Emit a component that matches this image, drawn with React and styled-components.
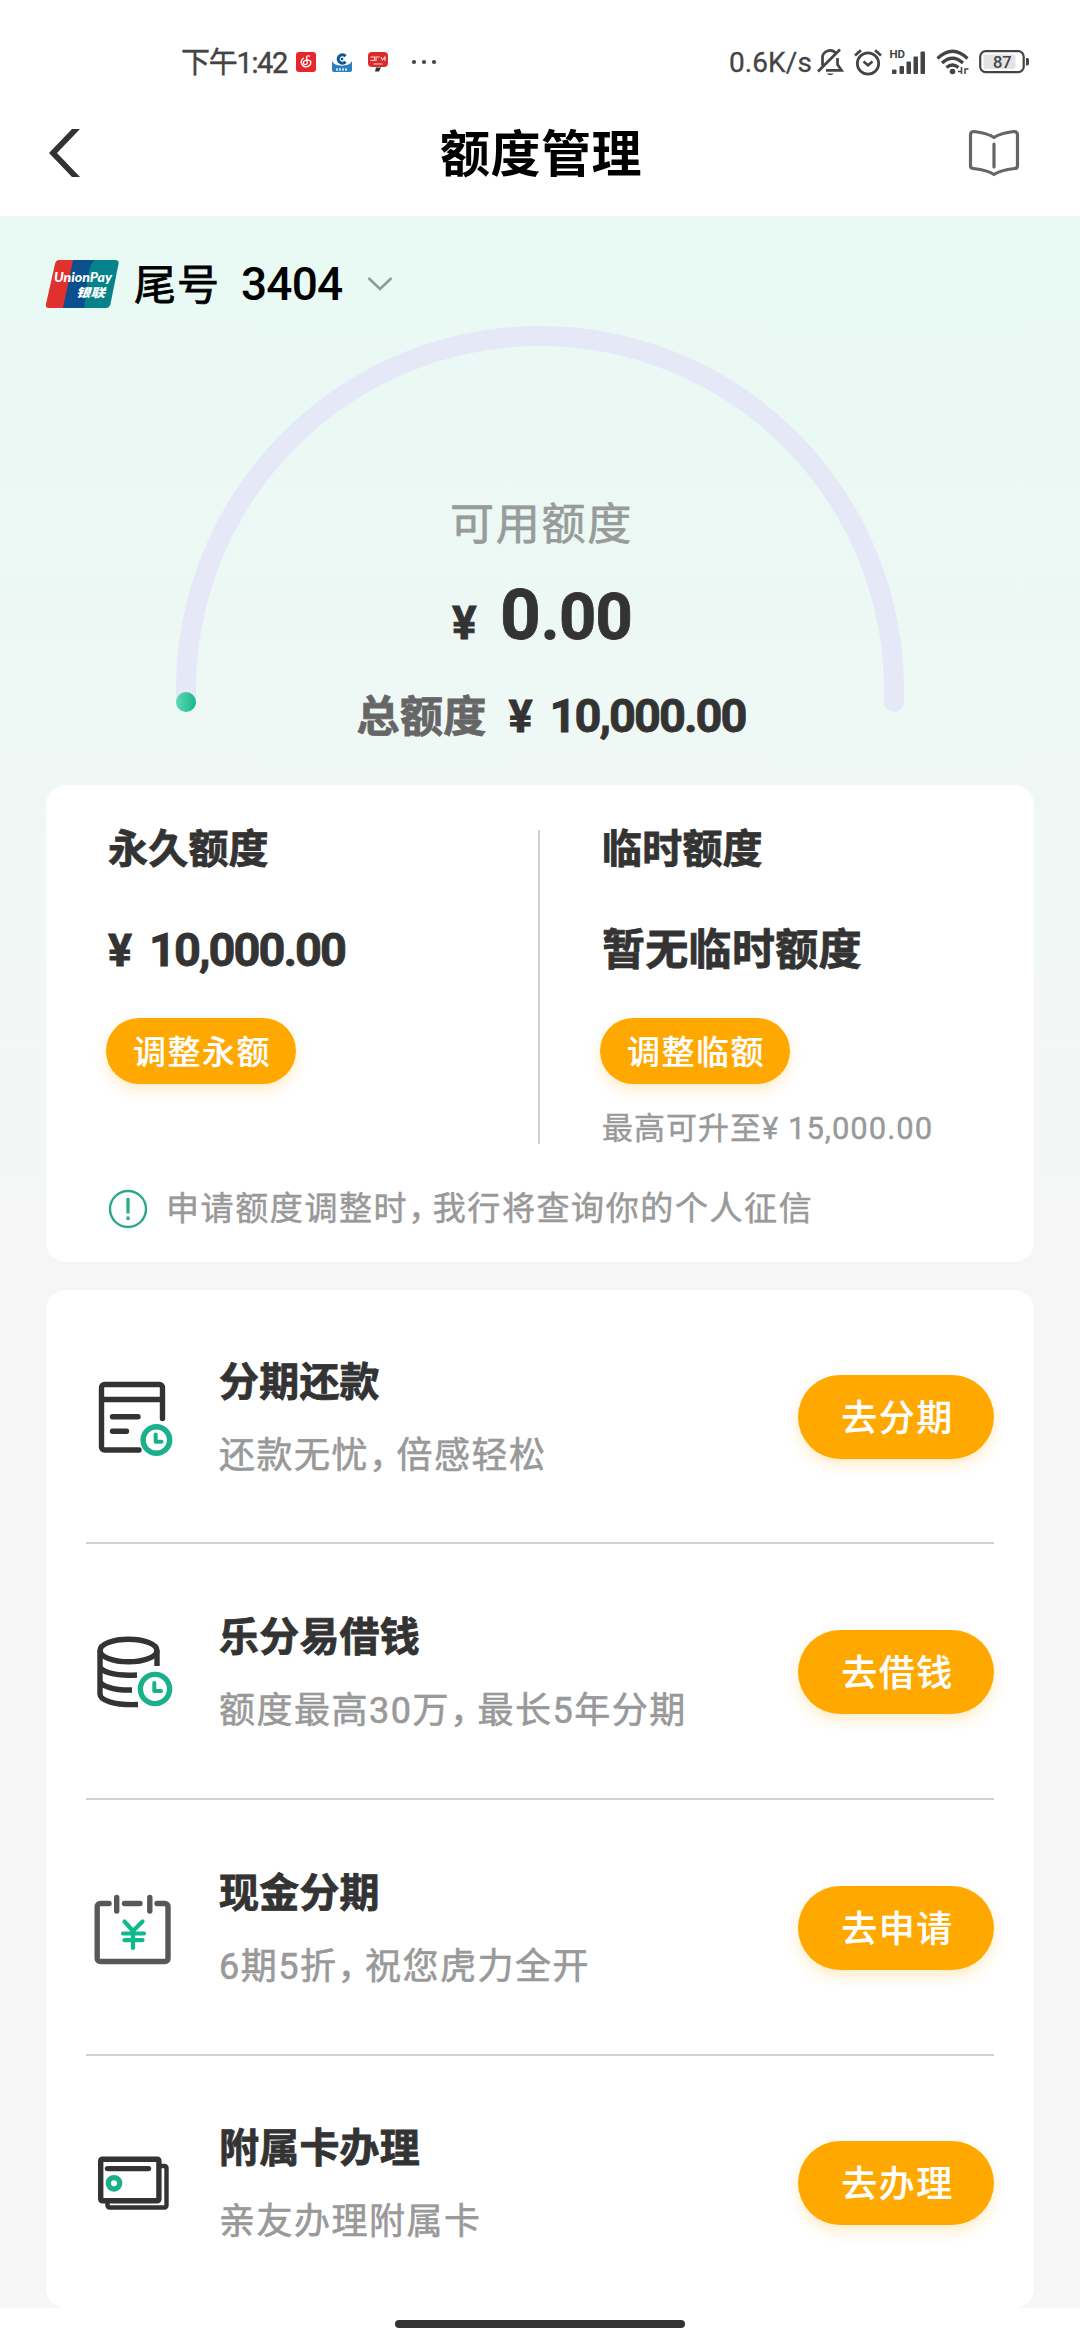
import React from "react";
import styled, { createGlobalStyle } from "styled-components";

const GlobalStyle = createGlobalStyle`
  * { box-sizing: border-box; }
  body {
    margin: 0;
    background: #fff;
    font-family: Roboto, "Noto Sans CJK SC", sans-serif;
    color: #333;
  }
  svg { display: block; flex: none; overflow: visible; }
  button { font-family: inherit; border: 0; padding: 0; }
`;

const Screen = styled.main`
  width: 1080px;
  height: 2340px;
  overflow: hidden;
  display: flex;
  flex-direction: column;
  background: #fff;
`;

/* ---------- status bar ---------- */
const StatusBar = styled.div`
  height: 100px;
  padding: 24px 51px 0 181px;
  display: flex;
  justify-content: space-between;
  align-items: center;
  color: #444;
  font-size: 28px;
  line-height: 36px;
`;
const StatusGroup = styled.div`
  display: flex;
  align-items: center;
  gap: ${(p) => p.$gap}px;
`;
const Clock = styled.span`
  width: 107px;
  margin-right: -8px;
  padding-top: 2px;
  white-space: nowrap;
  font-size: 29px;
  letter-spacing: -1.3px;
  -webkit-text-stroke: 0.4px currentColor;
`;
const Speed = styled.span`
  font-size: 28px;
  letter-spacing: 0.1px;
  padding-top: 2px;
  white-space: nowrap;
  margin-right: -5px;
  -webkit-text-stroke: 0.3px currentColor;
`;

/* ---------- header ---------- */
const Header = styled.header`
  height: 116px;
  padding: 0 61px 11px 48px;
  display: grid;
  grid-template-columns: 50px 1fr 50px;
  align-items: center;
`;
const Title = styled.h1`
  margin: 0;
  padding: 5px 0 0 15px;
  text-align: center;
  font-size: 50px;
  line-height: 60px;
  font-weight: 700;
  letter-spacing: 0.5px;
  color: #000;
`;

/* ---------- body ---------- */
const Body = styled.div`
  height: 2092px;
  padding: 44px 46px 0;
  display: flex;
  flex-direction: column;
  background: linear-gradient(#e8f9f4 0, #eff8f5 560px, #f6f6f6 1040px);
`;
const Account = styled.div`
  height: 48px;
  display: flex;
  align-items: center;
  color: #000;
  line-height: 48px;
`;
const AccountLabel = styled.span`
  margin-left: 15px;
  width: 107px;
  font-size: 42px;
  letter-spacing: 1px;
  padding-top: 3px;
  -webkit-text-stroke: 0.8px currentColor;
`;
const AccountNumber = styled.span`
  width: 126px;
  font-size: 46px;
  font-weight: 500;
  letter-spacing: -0.8px;
`;

const Gauge = styled.section`
  height: 459px;
  margin-top: 18px;
  display: grid;
  justify-items: center;
  align-items: start;
  > * { grid-area: 1 / 1; }
`;
const GaugeText = styled.div`
  display: flex;
  flex-direction: column;
  align-items: center;
`;
const Available = styled.div`
  margin-top: 171px;
  padding-left: 3px;
  font-size: 44px;
  line-height: 56px;
  letter-spacing: 1.8px;
  color: #979c9a;
  -webkit-text-stroke: 0.7px currentColor;
`;
const Balance = styled.div`
  margin-top: 22px;
  padding-left: 4px;
  height: 80px;
  line-height: 80px;
  display: flex;
  align-items: baseline;
  font-weight: 700;
  -webkit-text-stroke: 0.8px currentColor;
`;
const BalanceSign = styled.span`
  font-size: 46px;
  width: 48px;
`;
const BalanceInt = styled.span`
  font-size: 71px;
`;
const BalanceFraction = styled.span`
  font-size: 65px;
  letter-spacing: -0.8px;
`;
const Total = styled.div`
  margin: 33px 0 0 22px;
  display: flex;
  align-items: baseline;
  line-height: 56px;
  font-weight: 700;
`;
const TotalLabel = styled.span`
  width: 152px;
  font-size: 43px;
  color: #666;
  letter-spacing: 0.4px;
  -webkit-text-stroke: 0.8px currentColor;
`;
const Money = styled.span`
  display: inline-flex;
  align-items: baseline;
  font-size: 47px;
  font-weight: 700;
  line-height: 56px;
  letter-spacing: -2px;
  -webkit-text-stroke: 0.8px currentColor;
`;
const MoneySign = styled.span`
  width: 41px;
  font-size: 45px;
`;

/* ---------- cards ---------- */
const Card = styled.section`
  border-radius: 20px;
  background: #fff;
  display: flex;
  flex-direction: column;
`;
const LimitCard = styled(Card)`
  height: 477px;
  padding: 45px 0 0 60px;
`;
const Limits = styled.div`
  display: grid;
  grid-template-rows: 314px;
  grid-template-columns: 434px 60px 1fr;
`;
const Limit = styled.div`
  grid-column: ${(p) => p.$column};
  padding-left: 2px;
  display: flex;
  flex-direction: column;
  align-items: flex-start;
`;
const VerticalRule = styled.div`
  width: 2px;
  margin-left: -2px;
  background: #cfcfcf;
`;
const CardTitle = styled.h2`
  margin: 0;
  font-size: 40px;
  line-height: 40px;
  font-weight: 700;
  letter-spacing: 0.2px;
  -webkit-text-stroke: 0.8px currentColor;
`;
const LimitValue = styled.div`
  height: 56px;
  margin-top: 52px;
  font-size: 43px;
  line-height: 56px;
  font-weight: 700;
  letter-spacing: 0.3px;
  -webkit-text-stroke: 0.8px currentColor;
`;
const Pill = styled.button`
  flex: none;
  width: ${(p) => (p.$large ? 196 : 190)}px;
  height: ${(p) => (p.$large ? 84 : 66)}px;
  margin: ${(p) => (p.$large ? "2px 0 0 auto" : "40px 0 0 -2px")};
  padding: ${(p) => (p.$large ? "0 0 5px 3px" : "0 0 2px 2px")};
  border-radius: 42px;
  background: #ffa800;
  color: #fff;
  font-size: ${(p) => (p.$large ? 36 : 33)}px;
  font-weight: 500;
  letter-spacing: 1.5px;
  -webkit-text-stroke: 0.2px currentColor;
  box-shadow: 0 6px 14px rgba(255, 168, 0, 0.22);
`;
const Hint = styled.div`
  flex: none;
  margin-top: 27px;
  font-size: 31px;
  line-height: 36px;
  letter-spacing: 1px;
  color: #999;
  white-space: nowrap;
  -webkit-text-stroke: 0.4px currentColor;
`;
const Notice = styled.div`
  margin: 43px 0 0 2px;
  height: 44px;
  display: flex;
  align-items: center;
  gap: 18px;
  font-size: 33px;
  line-height: 44px;
  letter-spacing: 1.6px;
  color: #999;
  -webkit-text-stroke: 0.5px currentColor;
`;
const Comma = styled.span`
  letter-spacing: -8.5px;
`;

const ServiceCard = styled(Card)`
  height: 1018px;
  margin-top: 28px;
  padding: 0 40px;
`;
const Service = styled.article`
  height: ${(p) => (p.$edge ? 254 : 256)}px;
  display: flex;
  align-items: center;
  border-bottom: 2px solid #d2d2d2;
  &:last-child { border-bottom: 0; height: 252px; }
`;
const ServiceIcon = styled.svg`
  width: 84px;
  height: 84px;
  margin: 0 43px 0 6px;
  fill: none;
  stroke: ${(p) => p.$tone || "#333"};
  stroke-width: 5.4;
  stroke-linecap: round;
  stroke-linejoin: round;
`;
const ServiceText = styled.div`
  padding-top: 10px;
  display: flex;
  flex-direction: column;
  gap: 29px;
`;
const ServiceDesc = styled.p`
  margin: 0;
  font-size: 36px;
  line-height: 48px;
  letter-spacing: 1.5px;
  color: #999;
  -webkit-text-stroke: 0.6px currentColor;
`;

const HomeArea = styled.footer`
  flex: 1;
  display: flex;
  justify-content: center;
  padding-top: 12px;
`;
const HomeBar = styled.div`
  width: 290px;
  height: 8px;
  border-radius: 4px;
  background: #333;
`;

const GREEN = "#1ab08c";

function ServiceGlyph({ kind }) {
  if (kind === "bill")
    return (
      <ServiceIcon viewBox="0 0 84 84">
        <path d="M47 76H12.500a3 3 0 0 1-3-3V13.500a3 3 0 0 1 3-3h55a3 3 0 0 1 3 3V44.500M9.500 25.500h61M20.500 42.700H46M20.500 57.300H34.500" />
        <g stroke={GREEN}>
          <circle cx="64.400" cy="66" r="13.300" />
          <path d="M63.700 60.500V67.700H69.500" strokeWidth="4" />
        </g>
      </ServiceIcon>
    );
  if (kind === "coins")
    return (
      <ServiceIcon viewBox="0 0 84 84">
        <ellipse cx="36.500" cy="21.500" rx="28.500" ry="11.300" />
        <path d="M8 21.500V65c0 6 13 11.500 38 10.500M65 21.500V37M8 37c0 5 13 10.500 37 9M8 51.500c0 5 13 10 32 9.500" strokeLinecap="butt" />
        <g stroke={GREEN}>
          <circle cx="63" cy="60" r="14.600" />
          <path d="M62.300 54V62H69" strokeWidth="4" />
        </g>
      </ServiceIcon>
    );
  if (kind === "calendar")
    return (
      <ServiceIcon viewBox="0 0 84 84" $tone="#585858">
        <path d="M17 18.500H8.200a3 3 0 0 0-3 3V73.500a3 3 0 0 0 3 3H73a3 3 0 0 0 3-3V21.500a3 3 0 0 0-3-3H65M32.500 18.500H48M24.700 12.500V26M57.800 12.500V26" />
        <path d="M32.500 36.500l8.500 9.500 9.500-9.500M31 48.500H52M32.500 55.200H50.500M41 47V63" stroke="#10b98c" strokeWidth="4.200" />
      </ServiceIcon>
    );
  return (
    <ServiceIcon viewBox="0 0 84 84">
      <path d="M15.500 62v3.500a2 2 0 0 0 2 2h55a2 2 0 0 0 2-2V28a2 2 0 0 0-2-2H69" strokeWidth="4.400" />
      <rect x="8.700" y="19.300" width="58.200" height="41.500" rx="1.500" />
      <path d="M15.500 28.600H56.500" />
      <circle cx="22" cy="43.300" r="5.700" stroke={GREEN} />
    </ServiceIcon>
  );
}

function UnionPay() {
  return (
    <svg width="73" height="48" viewBox="0 0 73 48">
      <path d="M13 0H31L21 48H3Q-1 48 0 44L9 4Q10 0 13 0Z" fill="#e2312d" />
      <path d="M27 0H50L40 48H17Z" fill="#0b4f8e" />
      <path d="M51 0H69Q73.500 0 72.500 4L64.500 44Q63.500 48 60 48H38L42.500 14Q44.500 0 51 0Z" fill="#06838a" />
      <text x="8" y="21.500" fontFamily="Lato, sans-serif" fontWeight="900" fontStyle="italic" fontSize="13" fill="#fff" textLength="58" lengthAdjust="spacingAndGlyphs">UnionPay</text>
      <text x="30" y="37" fontFamily="Noto Sans CJK SC, sans-serif" fontWeight="900" fontStyle="italic" fontSize="12" fill="#fff" textLength="29" lengthAdjust="spacingAndGlyphs">银联</text>
    </svg>
  );
}

function MusicBadge() {
  return (
    <svg width="20" height="20" viewBox="0 0 20 20">
      <rect width="20" height="20" rx="3" fill="#e5262b" />
      <path d="M13.500 4.200Q10.500 3 10.600 6L11.300 10.500A2 2 0 1 1 8.500 8.800Q12.500 6.500 14.700 9.500A4.700 4.700 0 1 1 7.500 6.200" fill="none" stroke="#fff" strokeWidth="1.300" strokeLinecap="round" />
    </svg>
  );
}

function BankBadge() {
  return (
    <svg width="20" height="20" viewBox="0 0 20 20">
      <path d="M0 9Q2 13.500 10 13.500T20 9V18a2 2 0 0 1-2 2H2a2 2 0 0 1-2-2Z" fill="#2b7fc0" />
      <circle cx="10" cy="7" r="6.500" fill="#fff" />
      <path d="M13.500 4.200A4.200 4.200 0 1 0 13.500 9.800" fill="none" stroke="#0e5796" strokeWidth="3" />
      <rect x="8.800" y="5.800" width="2.400" height="2.400" fill="#0e5796" />
      <path d="M4 17.500h12" stroke="#bfe0f3" strokeWidth="2.500" strokeDasharray="2 1" />
    </svg>
  );
}

function SignBadge() {
  return (
    <svg width="20" height="20" viewBox="0 0 20 20">
      <rect width="20" height="15" rx="4" fill="#d92b2b" />
      <path d="M2.500 5h4v3.500h-4M8 9V5h3.500M13 5l1.500 3L17 5v4M5.500 12h9" fill="none" stroke="#ffd9d3" strokeWidth="1.100" />
      <path d="M8 15.500h5l-2 4H7Z" fill="#333" />
    </svg>
  );
}

function BellOff() {
  return (
    <svg width="27" height="28" viewBox="0 0 27 28" fill="none" stroke="#444" strokeWidth="2.700">
      <path d="M5.500 17.500V10.500A7.500 7.500 0 0 1 19 5.500M20.500 10V16.500L24.500 22.300H9M1 23.500L23 1.500" />
      <path d="M9.500 25.500h7.500q-3.700 3.500-7.500 0Z" fill="#444" stroke="none" />
    </svg>
  );
}

function Alarm() {
  return (
    <svg width="26" height="27" viewBox="0 0 26 27" fill="none" stroke="#444" strokeWidth="2.700">
      <circle cx="14" cy="14.500" r="10.700" />
      <path d="M1 6.500L7 1.300M27 6.500L21 1.300M9.500 12.500l4.500 3.800 4.500-3.800" />
    </svg>
  );
}

function Signal() {
  return (
    <svg width="36" height="26" viewBox="0 0 36 26" fill="#444">
      <text x="-0.500" y="9" fontFamily="Roboto, sans-serif" fontWeight="700" fontSize="11.500">HD</text>
      <rect x="2" y="20.500" width="4.500" height="4.500" rx="1" />
      <rect x="9.500" y="17" width="4.500" height="8" rx="1" />
      <rect x="16.500" y="12.500" width="4.500" height="12.500" rx="1" />
      <rect x="23.500" y="7.500" width="4.500" height="17.500" rx="1" />
      <rect x="30.500" y="2.500" width="4.500" height="22.500" rx="1" />
    </svg>
  );
}

function Wifi() {
  return (
    <svg width="33" height="26" viewBox="0 0 33 26" fill="none" stroke="#444" strokeWidth="3.200">
      <path d="M1.500 9.500Q16.500-5 31.500 9.500M6 14Q16.500 4.500 27 14M10.500 18.500Q16.500 13.500 22.500 18.500" />
      <circle cx="16.500" cy="22.500" r="2.800" fill="#444" stroke="none" />
      <path d="M22 22.500h3.500V18M25.500 20V25M29 25V20h3.500" strokeWidth="1.500" />
    </svg>
  );
}

function Battery() {
  return (
    <svg width="50" height="24" viewBox="0 0 50 24">
      <rect x="1.200" y="1.200" width="43.500" height="21" rx="5.500" fill="none" stroke="#444" strokeWidth="2.200" />
      <rect x="4.500" y="4.500" width="32" height="14.500" rx="2" fill="#e3e3e3" />
      <path d="M47 8h1.500q1.500 0 1.500 2v3.500q0 2-1.500 2H47Z" fill="#444" />
      <text x="23.300" y="17.800" textAnchor="middle" fontFamily="Roboto, sans-serif" fontSize="16.500" fontWeight="500" fill="#444">87</text>
    </svg>
  );
}

function Amount({ children }) {
  return (
    <Money>
      <MoneySign>¥</MoneySign>
      {children}
    </Money>
  );
}

/* The full-width comma is set tighter than its square. */
function Sentence({ text }) {
  const [head, tail] = text.split("，");
  if (!tail) return text;
  return (
    <span>
      {head}
      <Comma>，</Comma>
      {tail}
    </span>
  );
}

const services = [
  { kind: "bill", title: "分期还款", desc: "还款无忧，倍感轻松", action: "去分期" },
  { kind: "coins", title: "乐分易借钱", desc: "额度最高30万，最长5年分期", action: "去借钱" },
  { kind: "calendar", title: "现金分期", desc: "6期5折，祝您虎力全开", action: "去申请" },
  { kind: "card", title: "附属卡办理", desc: "亲友办理附属卡", action: "去办理" },
];

export default function App() {
  return (
    <Screen>
      <GlobalStyle />
      <StatusBar>
        <StatusGroup $gap={16}>
          <Clock>下午1:42</Clock>
          <MusicBadge />
          <BankBadge />
          <SignBadge />
          <svg width="50" height="20" viewBox="0 0 50 20" fill="#444">
            <circle cx="10" cy="10" r="2.100" />
            <circle cx="20" cy="10" r="2.100" />
            <circle cx="30" cy="10" r="2.100" />
          </svg>
        </StatusGroup>
        <StatusGroup $gap={10}>
          <Speed>0.6K/s</Speed>
          <BellOff />
          <Alarm />
          <Signal />
          <Wifi />
          <Battery />
        </StatusGroup>
      </StatusBar>

      <Header>
        <svg width="34" height="48" viewBox="0 0 34 48">
          <path d="M24 0H32L9 24 32 48H24L1 24Z" fill="#333" />
        </svg>
        <Title>额度管理</Title>
        <svg width="50" height="46" viewBox="0 0 50 46" fill="none" stroke="#666" strokeWidth="3.200" strokeLinejoin="round" strokeLinecap="round">
          <path d="M25 7.500C20 4 13 2.500 5 1.500Q1.500 1.500 1.500 5V35.500Q1.500 38.500 4.500 38.500C13 39.500 20 41 25 44.500C30 41 37 39.500 45.500 38.500Q48.500 38.500 48.500 35.500V5Q48.500 1.500 45 1.500C37 2.500 30 4 25 7.500ZM25 14V37" />
        </svg>
      </Header>

      <Body>
        <Account>
          <UnionPay />
          <AccountLabel>尾号</AccountLabel>
          <AccountNumber>3404</AccountNumber>
          <svg width="26" height="14" viewBox="0 0 26 14" fill="none" stroke="#8f9996" strokeWidth="2.600">
            <path d="M1.500 1L13 12 24.500 1" />
          </svg>
        </Account>

        <Gauge>
          <svg width="728" height="388" viewBox="0 0 728 388" fill="none">
            <defs>
              <linearGradient id="knob">
                <stop offset="0" stopColor="#5fd8b2" />
                <stop offset="1" stopColor="#17b888" />
              </linearGradient>
            </defs>
            <path d="M10 376V364A354 354 0 0 1 718 364V376" stroke="#e5e9f7" strokeWidth="20" strokeLinecap="round" />
            <circle cx="10" cy="376" r="10" fill="url(#knob)" />
          </svg>
          <GaugeText>
            <Available>可用额度</Available>
            <Balance>
              <BalanceSign>¥</BalanceSign>
              <BalanceInt>0</BalanceInt>
              <BalanceFraction>.00</BalanceFraction>
            </Balance>
            <Total>
              <TotalLabel>总额度</TotalLabel>
              <Amount>10,000.00</Amount>
            </Total>
          </GaugeText>
        </Gauge>

        <LimitCard>
          <Limits>
            <Limit $column={1}>
              <CardTitle>永久额度</CardTitle>
              <LimitValue>
                <Amount>10,000.00</Amount>
              </LimitValue>
              <Pill>调整永额</Pill>
            </Limit>
            <VerticalRule />
            <Limit $column={3}>
              <CardTitle>临时额度</CardTitle>
              <LimitValue>暂无临时额度</LimitValue>
              <Pill>调整临额</Pill>
              <Hint>最高可升至¥ 15,000.00</Hint>
            </Limit>
          </Limits>
          <Notice>
            <svg width="40" height="40" viewBox="0 0 40 40" fill="none" stroke="#2aa98a" strokeWidth="2.400">
              <circle cx="20" cy="20" r="18" />
              <path d="M20 9V24.500M20 27.500V31" strokeWidth="3.200" />
            </svg>
            <Sentence text="申请额度调整时，我行将查询你的个人征信" />
          </Notice>
        </LimitCard>

        <ServiceCard>
          {services.map((s, i) => (
            <Service key={s.kind} $edge={i === 0}>
              <ServiceGlyph kind={s.kind} />
              <ServiceText>
                <CardTitle>{s.title}</CardTitle>
                <ServiceDesc>
                  <Sentence text={s.desc} />
                </ServiceDesc>
              </ServiceText>
              <Pill $large>{s.action}</Pill>
            </Service>
          ))}
        </ServiceCard>
      </Body>

      <HomeArea>
        <HomeBar />
      </HomeArea>
    </Screen>
  );
}
